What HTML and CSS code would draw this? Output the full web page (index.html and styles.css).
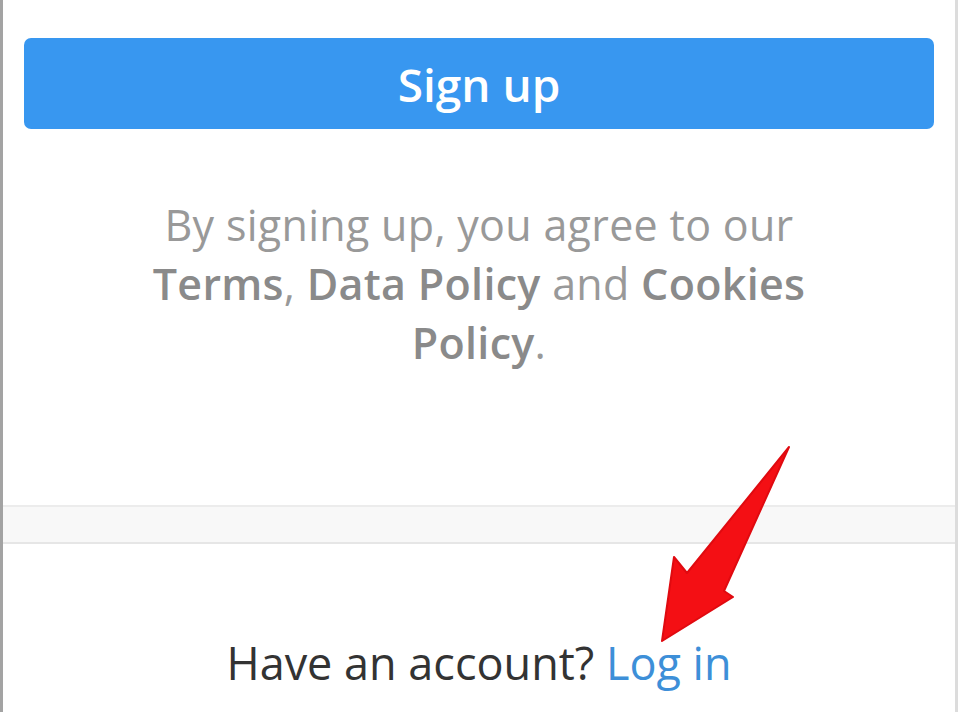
FILE: index.html
```html
<!DOCTYPE html>
<html lang="en">
<head>
    <meta charset="UTF-8">
    <meta name="viewport" content="width=device-width, initial-scale=1.0">
    <title>Sign up</title>
    <link rel="stylesheet" href="styles.css">
</head>
<body>
    <div class="page">
        <!-- Partie haute : bouton et conditions -->
        <div class="signup">
            <button class="btn-signup">Sign up</button>
            <p class="terms">By signing up, you agree to our <b>Terms</b>, <b>Data Policy</b> and <b>Cookies</b> <b>Policy</b>.</p>
        </div>

        <div class="divider"></div>

        <!-- Partie basse : lien de connexion -->
        <div class="login">
            <p>Have an account? <a href="#">Log in</a></p>
        </div>

        <svg class="arrow" width="958" height="712" viewBox="0 0 958 712">
            <polygon points="789,447 724,591 733,597 662,641 674,557 687,573" fill="#f40f14" stroke="#e00a10" stroke-width="2" stroke-linejoin="round"/>
        </svg>
    </div>
</body>
</html>
```

FILE: styles.css
```css
body {
    font-family: "Open Sans", "Noto Sans", sans-serif;
    margin: 0;
    padding: 0;
    background-color: #fff;
}
.page {
    position: relative;
    height: 712px;
    border-left: 3px solid #a3a3a3;
    border-right: 3px solid #dcdcdc;
    overflow: hidden;
}
.signup {
    padding: 38px 21px 0 21px;
    height: 467px;
    border-bottom: 2px solid #ececec;
}
.btn-signup {
    display: block;
    width: 100%;
    height: 91px;
    padding: 0;
    border: none;
    border-radius: 7px;
    background-color: #3897f0;
    color: #fff;
    font-family: inherit;
    font-size: 46px;
    font-weight: 600;
    cursor: pointer;
}
.terms {
    margin: 66px auto 0;
    width: 690px;
    text-align: center;
    font-size: 43px;
    line-height: 59px;
    letter-spacing: 0.3px;
    color: #999;
}
.terms b {
    font-weight: 600;
    color: #8a8a8a;
}
.divider {
    height: 35px;
    background-color: #f8f8f8;
    border-bottom: 2px solid #e6e6e6;
}
.login p {
    margin: 88px 0 0;
    text-align: center;
    font-size: 45px;
    color: #333;
}
.login a {
    color: #3d8fd8;
    text-decoration: none;
}
.arrow {
    position: absolute;
    left: -3px;
    top: 0;
    pointer-events: none;
}
```
